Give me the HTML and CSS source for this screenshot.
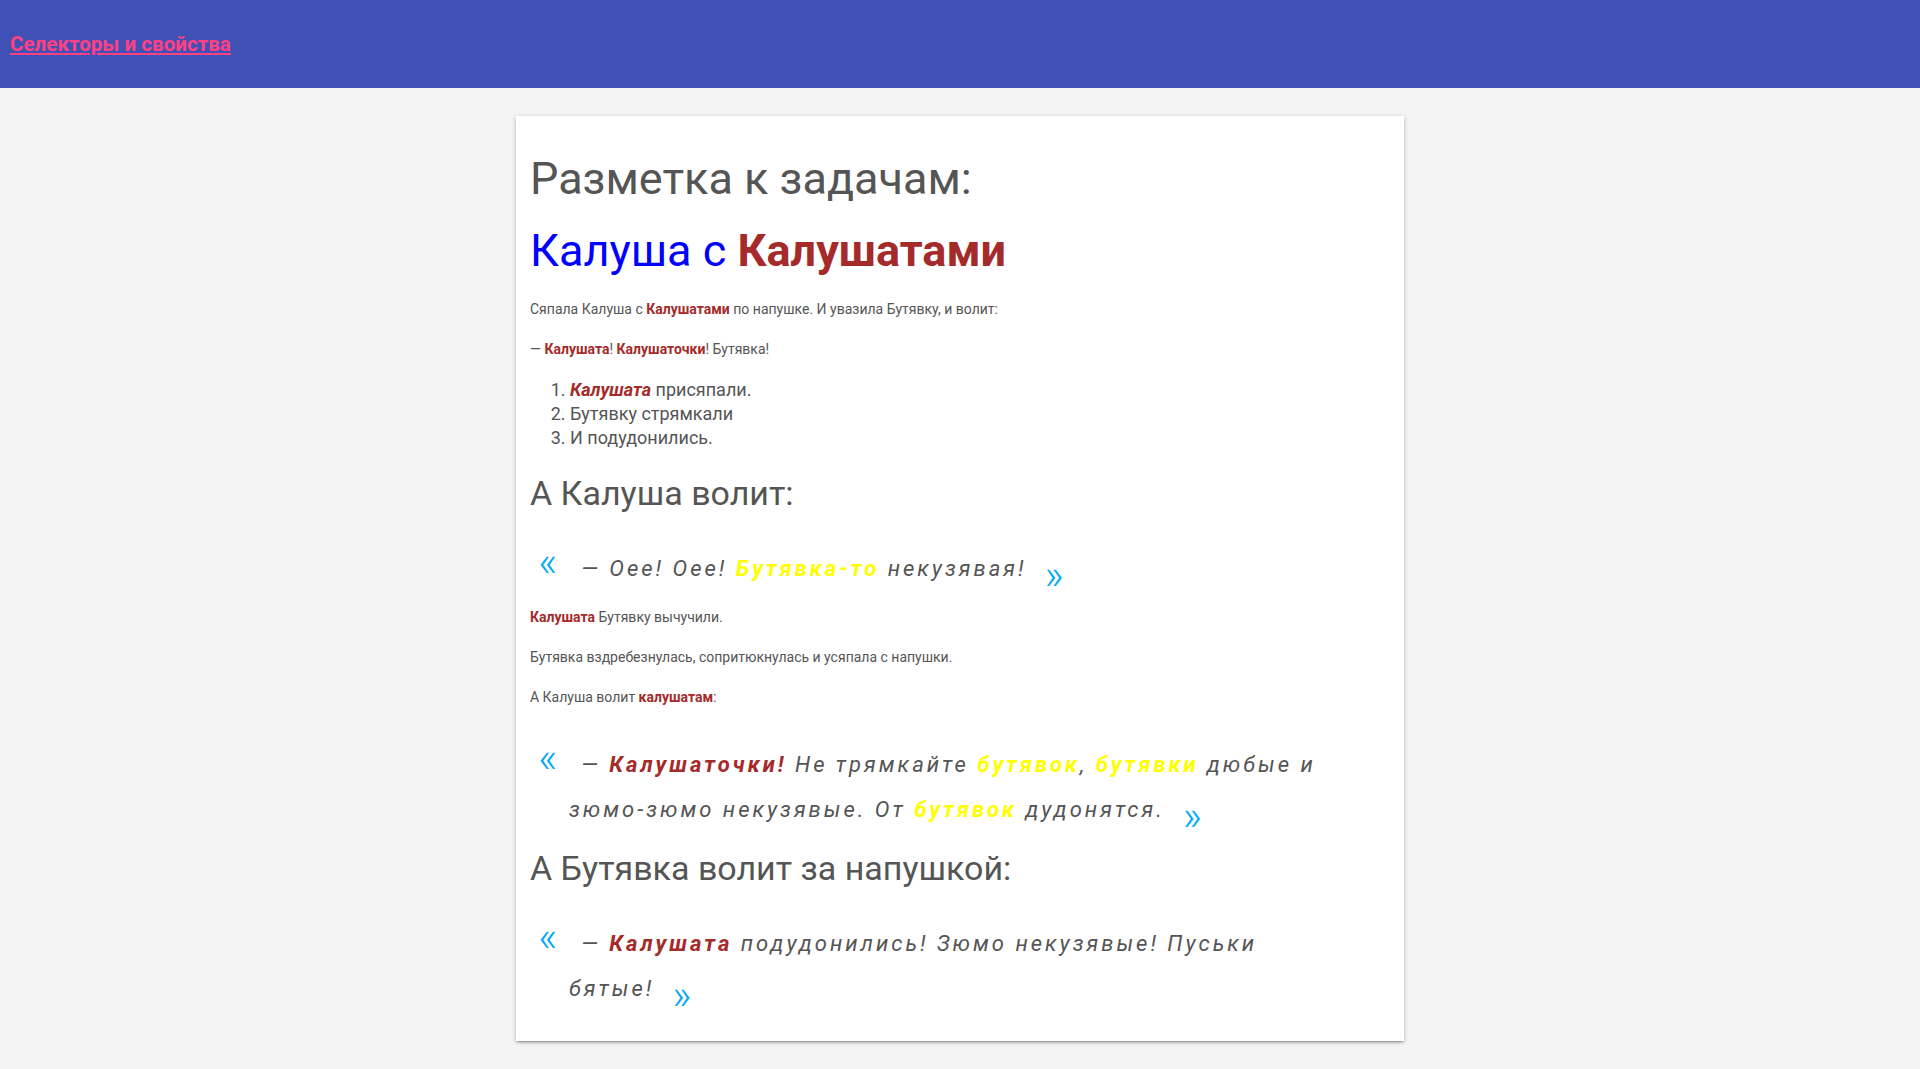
FILE: index.html
```html
<!DOCTYPE html>
<html lang="ru">
<head>
<meta charset="utf-8">
<title>Селекторы и свойства</title>
<link rel="stylesheet" href="styles.css">
</head>
<body>
<header class="topbar">
  <a class="topbar-link" href="#">Селекторы и свойства</a>
</header>
<main class="page">
  <article class="card">
    <h1 class="title">Разметка к задачам:</h1>
    <h2 class="subtitle"><span class="blue">Калуша с </span><b class="kal">Калушатами</b></h2>
    <p class="text first">Сяпала Калуша с <b class="kal">Калушатами</b> по напушке. И увазила Бутявку, и волит:</p>
    <p class="text">— <b class="kal">Калушата</b>! <b class="kal">Калушаточки</b>! Бутявка!</p>
    <ol class="list">
      <li><b class="kal"><i>Калушата</i></b> присяпали.</li>
      <li>Бутявку стрямкали</li>
      <li>И подудонились.</li>
    </ol>
    <h3 class="section">А Калуша волит:</h3>
    <blockquote class="quote q1">— Оее! Оее! <b class="yellow">Бутявка-то</b> некузявая!</blockquote>
    <p class="text after-quote"><b class="kal">Калушата</b> Бутявку вычучили.</p>
    <p class="text">Бутявка вздребезнулась, сопритюкнулась и усяпала с напушки.</p>
    <p class="text">А Калуша волит <b class="kal">калушатам</b>:</p>
    <blockquote class="quote q2">— <b class="kal">Калушаточки!</b> Не трямкайте <b class="yellow">бутявок</b>, <b class="yellow">бутявки</b> дюбые и зюмо-зюмо некузявые. От <b class="yellow">бутявок</b> дудонятся.</blockquote>
    <h3 class="section section-b">А Бутявка волит за напушкой:</h3>
    <blockquote class="quote q3">— <b class="kal">Калушата</b> подудонились! Зюмо некузявые! Пуськи бятые!</blockquote>
  </article>
</main>
</body>
</html>
```
FILE: styles.css
```css
html, body {
  margin: 0;
  padding: 0;
}
body {
  background: #f4f4f4;
  font-family: Roboto, "Noto Sans", sans-serif;
  color: #555;
}
.topbar {
  background: #3f51b5;
  height: 88px;
  line-height: 88px;
  padding-left: 10px;
}
.topbar-link {
  color: #ff4081;
  font-size: 20.6px;
  font-weight: 700;
  text-decoration: underline;
}
.page {
  padding-top: 28px;
  padding-bottom: 28px;
}
.card {
  width: 860px;
  margin: 0 auto;
  background: #fff;
  padding: 39px 14px 30px;
  box-shadow: 0 2px 2px 0 rgba(0,0,0,.14), 0 3px 1px -2px rgba(0,0,0,.12), 0 1px 5px 0 rgba(0,0,0,.2);
}
.title {
  margin: 0;
  font-size: 45px;
  line-height: 48px;
  font-weight: 400;
}
.subtitle {
  margin: 23px 0 0;
  font-size: 45px;
  line-height: 50px;
  font-weight: 400;
}
.blue { color: #0000ff; }
.kal { color: #a52a2a; font-weight: 700; }
.yellow { color: #ffff00; font-weight: 700; }
.text {
  margin: 20px 0 0;
  font-size: 14px;
  line-height: 20px;
}
.text.first { margin-top: 23px; }
.text.after-quote { margin-top: 16px; }
.list {
  margin: 19px 0 0;
  padding-left: 40px;
  font-size: 18px;
  line-height: 24px;
}
.section {
  margin: 24px 0 0;
  font-size: 34px;
  line-height: 38px;
  font-weight: 400;
}
.section-b { margin-top: 17px; }
.quote {
  margin: 34px 0 0 39px;
  font-size: 22px;
  line-height: 45px;
  font-style: italic;
  letter-spacing: 3px;
  max-width: 790px;
}
.quote::before {
  content: "\00AB";
  color: #03a9f4;
  font-style: normal;
  font-weight: 300;
  font-size: 42px;
  line-height: 0;
  letter-spacing: 0;
  margin-left: -31px;
  margin-right: 24px;
  vertical-align: 0;
}
.quote::after {
  content: "\00BB";
  color: #03a9f4;
  font-style: normal;
  font-weight: 300;
  font-size: 42px;
  line-height: 0;
  letter-spacing: 0;
  margin-left: 18px;
  vertical-align: -13px;
}
.q2 { margin-top: 35px; }
.q3 { margin-top: 34px; }
```
